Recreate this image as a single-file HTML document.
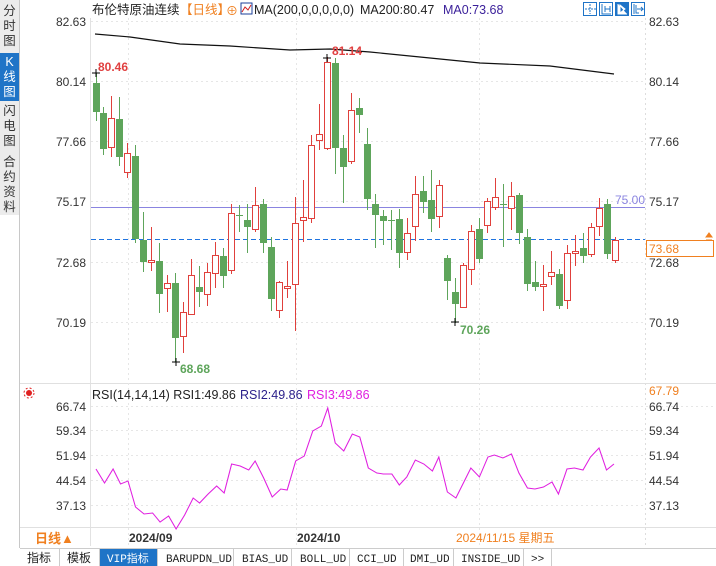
<!DOCTYPE html>
<html><head><meta charset="utf-8"><style>
html,body{margin:0;padding:0;background:#fff;width:716px;height:566px;overflow:hidden;font-family:"Liberation Sans","Noto Sans CJK SC",sans-serif}
svg{display:block}
.t{font-family:"Liberation Sans","Noto Sans CJK SC",sans-serif}
.m{font-family:"Liberation Mono","Noto Sans CJK SC",monospace}
</style></head><body>
<svg id="s" width="716" height="566" viewBox="0 0 716 566" xmlns="http://www.w3.org/2000/svg">
<rect x="0" y="0" width="19" height="215" fill="#ececec"/>
<line x1="19.5" y1="0" x2="19.5" y2="548" stroke="#c8c8c8"/>
<rect x="0" y="53" width="19" height="48" fill="#1f74c7"/>
<g class="t" font-size="12.5" text-anchor="middle">
<text x="9.5" y="15" fill="#333">分</text><text x="9.5" y="30" fill="#333">时</text><text x="9.5" y="45" fill="#333">图</text>
<text x="9.5" y="66" fill="#fff">K</text><text x="9.5" y="81" fill="#fff">线</text><text x="9.5" y="96" fill="#fff">图</text>
<text x="9.5" y="115" fill="#333">闪</text><text x="9.5" y="130" fill="#333">电</text><text x="9.5" y="145" fill="#333">图</text>
<text x="9.5" y="166" fill="#333">合</text><text x="9.5" y="181" fill="#333">约</text><text x="9.5" y="196" fill="#333">资</text><text x="9.5" y="211" fill="#333">料</text>
</g>
<line x1="90.5" y1="18" x2="90.5" y2="546" stroke="#e2e2e2"/>
<line x1="645.5" y1="18" x2="645.5" y2="546" stroke="#ddd" stroke-dasharray="2,3"/>
<line x1="20" y1="383.5" x2="716" y2="383.5" stroke="#e0e0e0"/>
<line x1="20" y1="527.5" x2="716" y2="527.5" stroke="#e0e0e0"/>
<g stroke="#e6e6e6" stroke-dasharray="2,3">
<line x1="91" y1="21.5" x2="645" y2="21.5"/><line x1="91" y1="81.5" x2="645" y2="81.5"/><line x1="91" y1="141.5" x2="645" y2="141.5"/><line x1="91" y1="201.5" x2="645" y2="201.5"/><line x1="91" y1="262.5" x2="645" y2="262.5"/><line x1="91" y1="322.5" x2="645" y2="322.5"/>
<line x1="91" y1="406.5" x2="716" y2="406.5"/><line x1="91" y1="430.5" x2="645" y2="430.5"/><line x1="91" y1="455.5" x2="645" y2="455.5"/><line x1="91" y1="480.5" x2="645" y2="480.5"/><line x1="91" y1="505.5" x2="645" y2="505.5"/>
<line x1="128.5" y1="18" x2="128.5" y2="546"/><line x1="296.5" y1="18" x2="296.5" y2="546"/><line x1="479.5" y1="18" x2="479.5" y2="546"/>
</g>
<text class="t" x="92" y="14" font-size="12.5" fill="#222">布伦特原油连续</text>
<text class="t" x="180" y="14" font-size="12.5" fill="#f08020">【日线】</text>
<text class="t" x="226" y="15" font-size="12" fill="#f08020">⊕</text>
<rect x="241" y="3" width="11" height="11" fill="#fff" stroke="#1b3f9a"/>
<polyline points="242,12 245,7 248,10 251,5" fill="none" stroke="#d02020"/>
<text class="t" x="254" y="14" font-size="12.5" fill="#222">MA(200,0,0,0,0,0)</text>
<text class="t" x="360" y="14" font-size="12.5" fill="#222">MA200:80.47</text>
<text class="t" x="443" y="14" font-size="12.5" fill="#3a1f9a">MA0:73.68</text>
<g fill="none" stroke="#1f74c7">
<rect x="583.5" y="2.5" width="13" height="13"/><rect x="599.5" y="2.5" width="13" height="13"/><rect x="615.5" y="2.5" width="13" height="13" fill="#1f74c7"/><rect x="631.5" y="2.5" width="13" height="13"/>
<path d="M590 4v10M585 9h11" stroke-dasharray="2,1"/>
<path d="M602 4v10h9M605 6v6M605 9h5M610 6v6"/>
<path d="M618 4v10h9M620 5l5 4-5 4z" stroke="#fff" fill="#fff"/>
<path d="M634 4v10M636 5v8h3M637 9h6l-2-2M643 9l-2 2"/>
</g>
<g class="t" font-size="12" fill="#333" text-anchor="end">
<text x="86" y="26">82.63</text><text x="86" y="86">80.14</text><text x="86" y="146">77.66</text><text x="86" y="206">75.17</text><text x="86" y="267">72.68</text><text x="86" y="327">70.19</text>
<text x="86" y="411">66.74</text><text x="86" y="435">59.34</text><text x="86" y="460">51.94</text><text x="86" y="485">44.54</text><text x="86" y="510">37.13</text>
</g>
<g class="t" font-size="12" fill="#333">
<text x="649" y="26">82.63</text><text x="649" y="86">80.14</text><text x="649" y="146">77.66</text><text x="649" y="206">75.17</text><text x="649" y="267">72.68</text><text x="649" y="327">70.19</text>
<text x="649" y="411">66.74</text><text x="649" y="435">59.34</text><text x="649" y="460">51.94</text><text x="649" y="485">44.54</text><text x="649" y="510">37.13</text>
<text x="649" y="395" fill="#f08020">67.79</text>
</g>
<line x1="91" y1="207.5" x2="645" y2="207.5" stroke="#8a84e0"/>
<line x1="91" y1="239.5" x2="645" y2="239.5" stroke="#1f74e0" stroke-dasharray="5,3"/>
<text class="t" x="615" y="204" font-size="12" fill="#8a84e0">75.00</text>
<rect x="646.5" y="240.5" width="67" height="16" fill="#fff" stroke="#f08020"/>
<text class="t" x="649" y="253" font-size="12" fill="#f08020">73.68</text>
<path d="M706 237l3-4 3 4zM706 240h6" fill="#f08020" stroke="#f08020"/>
<polyline points="95,34 130,37 180,44 230,46 290,50 330,49 370,52 420,57 480,63 550,66 614,74" fill="none" stroke="#111" stroke-width="1.2"/>
<g id="c"></g>
<path d="M92 73h8M96 69v8M323 58h8M327 54v8M172 362h8M176 358v8M451 322h8M455 318v8" stroke="#000"/>
<g class="t" font-size="12" font-weight="bold">
<text x="98" y="71" fill="#e04040">80.46</text><text x="332" y="55" fill="#e04040">81.14</text>
<text x="180" y="373" fill="#5ea55b">68.68</text><text x="460" y="334" fill="#5ea55b">70.26</text>
</g>
<circle cx="29" cy="393" r="3" fill="#e02020"/><circle cx="29" cy="393" r="5" fill="none" stroke="#e02020" stroke-dasharray="2,2"/>
<text class="t" x="92" y="399" font-size="12.5" fill="#222">RSI(14,14,14) RSI1:49.86</text>
<text class="t" x="240" y="399" font-size="12.5" fill="#2a1f8a">RSI2:49.86</text>
<text class="t" x="307" y="399" font-size="12.5" fill="#e020e0">RSI3:49.86</text>
<polyline transform="translate(-4.4,0) scale(1.068,1)" fill="none" stroke="#e020e0" points="94,469 102,483 110,469 117,484 124,481 131,507 139,514 147,513 154,522 162,516 169,529 177,515 185,498 191,503 199,494 207,486 214,493 221,464 229,466 237,470 243,461 251,478 259,497 267,489 273,490 281,461 289,456 297,431 305,426 311,408 318,443 326,451 334,434 341,437 349,468 357,473 363,474 371,474 378,485 385,477 393,460 401,464 409,471 415,457 423,492 431,498 438,483 445,468 453,477 461,457 467,455 475,458 483,454 490,473 498,488 505,489 513,487 521,482 527,494 535,469 542,468 550,470 557,457 565,448 572,470 579,464"/>
<text class="t" x="35" y="543" font-size="13" font-weight="bold" fill="#f08020">日线▲</text>
<text class="t" x="129" y="542" font-size="12" font-weight="bold" fill="#333">2024/09</text>
<text class="t" x="297" y="542" font-size="12" font-weight="bold" fill="#333">2024/10</text>
<text class="t" x="456" y="542" font-size="12" fill="#f08020">2024/11/15 星期五</text>
<rect x="20" y="548" width="696" height="18" fill="#fff"/>
<line x1="20" y1="548.5" x2="716" y2="548.5" stroke="#ccc"/>
<rect x="99" y="549" width="58" height="17" fill="#1f74c7"/>
<g stroke="#ccc"><line x1="59.5" y1="549" x2="59.5" y2="566"/><line x1="99.5" y1="549" x2="99.5" y2="566"/><line x1="157.5" y1="549" x2="157.5" y2="566"/><line x1="233.5" y1="549" x2="233.5" y2="566"/><line x1="291.5" y1="549" x2="291.5" y2="566"/><line x1="349.5" y1="549" x2="349.5" y2="566"/><line x1="403.5" y1="549" x2="403.5" y2="566"/><line x1="453.5" y1="549" x2="453.5" y2="566"/><line x1="523.5" y1="549" x2="523.5" y2="566"/><line x1="551.5" y1="549" x2="551.5" y2="566"/></g>
<g class="m" font-size="11" fill="#222">
<text x="27" y="562" class="t" font-size="12">指标</text><text x="67" y="562" class="t" font-size="12">模板</text>
<text x="107" y="562" fill="#fff">VIP指标</text>
<text x="166" y="562">BARUPDN_UD</text><text x="242" y="562">BIAS_UD</text><text x="300" y="562">BOLL_UD</text><text x="357" y="562">CCI_UD</text><text x="410" y="562">DMI_UD</text><text x="461" y="562">INSIDE_UD</text><text x="531" y="562">&gt;&gt;</text>
</g>
</svg>
<script>
var d=[[96,83,112,73,121,'g'],[103,113,149,107,155,'g'],[111,118,147,96,157,'r'],[119,119,157,97,166,'g'],[127,153,172,143,178,'r'],[135,156,239,145,243,'g'],[143,240,262,212,272,'g'],[151,260,262,227,271,'r'],[159,261,294,243,313,'g'],[167,283,288,275,312,'r'],[175,283,338,273,362,'g'],[183,312,336,302,353,'r'],[191,275,314,259,314,'r'],[199,287,292,266,307,'g'],[207,272,294,263,306,'r'],[215,255,273,242,288,'r'],[223,256,276,248,288,'g'],[231,213,270,204,274,'r'],[239,215,216,205,232,'g'],[247,220,227,204,253,'g'],[255,205,229,187,232,'r'],[263,204,243,199,253,'g'],[271,247,299,237,311,'g'],[279,282,310,281,318,'r'],[287,286,288,261,298,'r'],[295,223,284,197,331,'r'],[303,217,220,180,242,'r'],[311,145,218,135,223,'r'],[319,134,140,104,150,'r'],[327,62,148,57,150,'r'],[335,63,148,58,174,'g'],[343,148,167,135,203,'g'],[351,110,161,93,164,'r'],[359,108,115,98,133,'g'],[367,144,199,128,210,'g'],[375,204,215,194,248,'g'],[383,216,221,210,245,'g'],[391,220,221,210,250,'g'],[399,219,253,209,268,'g'],[407,233,252,218,260,'r'],[415,194,226,176,241,'r'],[423,191,202,176,213,'g'],[431,200,219,170,232,'g'],[439,185,216,180,228,'r'],[447,258,281,255,300,'g'],[455,292,304,278,323,'g'],[463,265,307,263,308,'r'],[471,231,269,225,285,'r'],[479,229,259,218,263,'g'],[487,201,225,198,233,'r'],[495,197,207,178,210,'r'],[503,204,205,184,247,'g'],[511,196,208,182,230,'r'],[519,195,233,193,244,'g'],[527,237,284,229,291,'g'],[535,282,287,261,291,'g'],[543,284,286,265,311,'r'],[551,272,276,251,285,'r'],[559,274,306,269,309,'g'],[567,253,300,245,309,'r'],[575,251,253,235,266,'r'],[583,248,256,233,263,'g'],[591,227,254,223,257,'r'],[599,208,226,198,236,'r'],[607,204,254,199,259,'g'],[615,240,260,237,263,'r']];
var h='';d.forEach(function(c){var x=c[0],col=c[5]=='g'?'#5ea55b':'#e0403c';
h+='<line x1="'+(x+.5)+'" y1="'+c[3]+'" x2="'+(x+.5)+'" y2="'+c[4]+'" stroke="'+col+'"/>';
if(c[5]=='g'){h+='<rect x="'+(x-3)+'" y="'+c[1]+'" width="7" height="'+Math.max(1,c[2]-c[1])+'" fill="'+col+'"/>';}
else{h+='<rect x="'+(x-2.5)+'" y="'+(c[1]+.5)+'" width="6" height="'+Math.max(1,c[2]-c[1])+'" fill="#fff" stroke="'+col+'"/>';}});
document.getElementById('c').innerHTML=h;
</script>
</body></html>
